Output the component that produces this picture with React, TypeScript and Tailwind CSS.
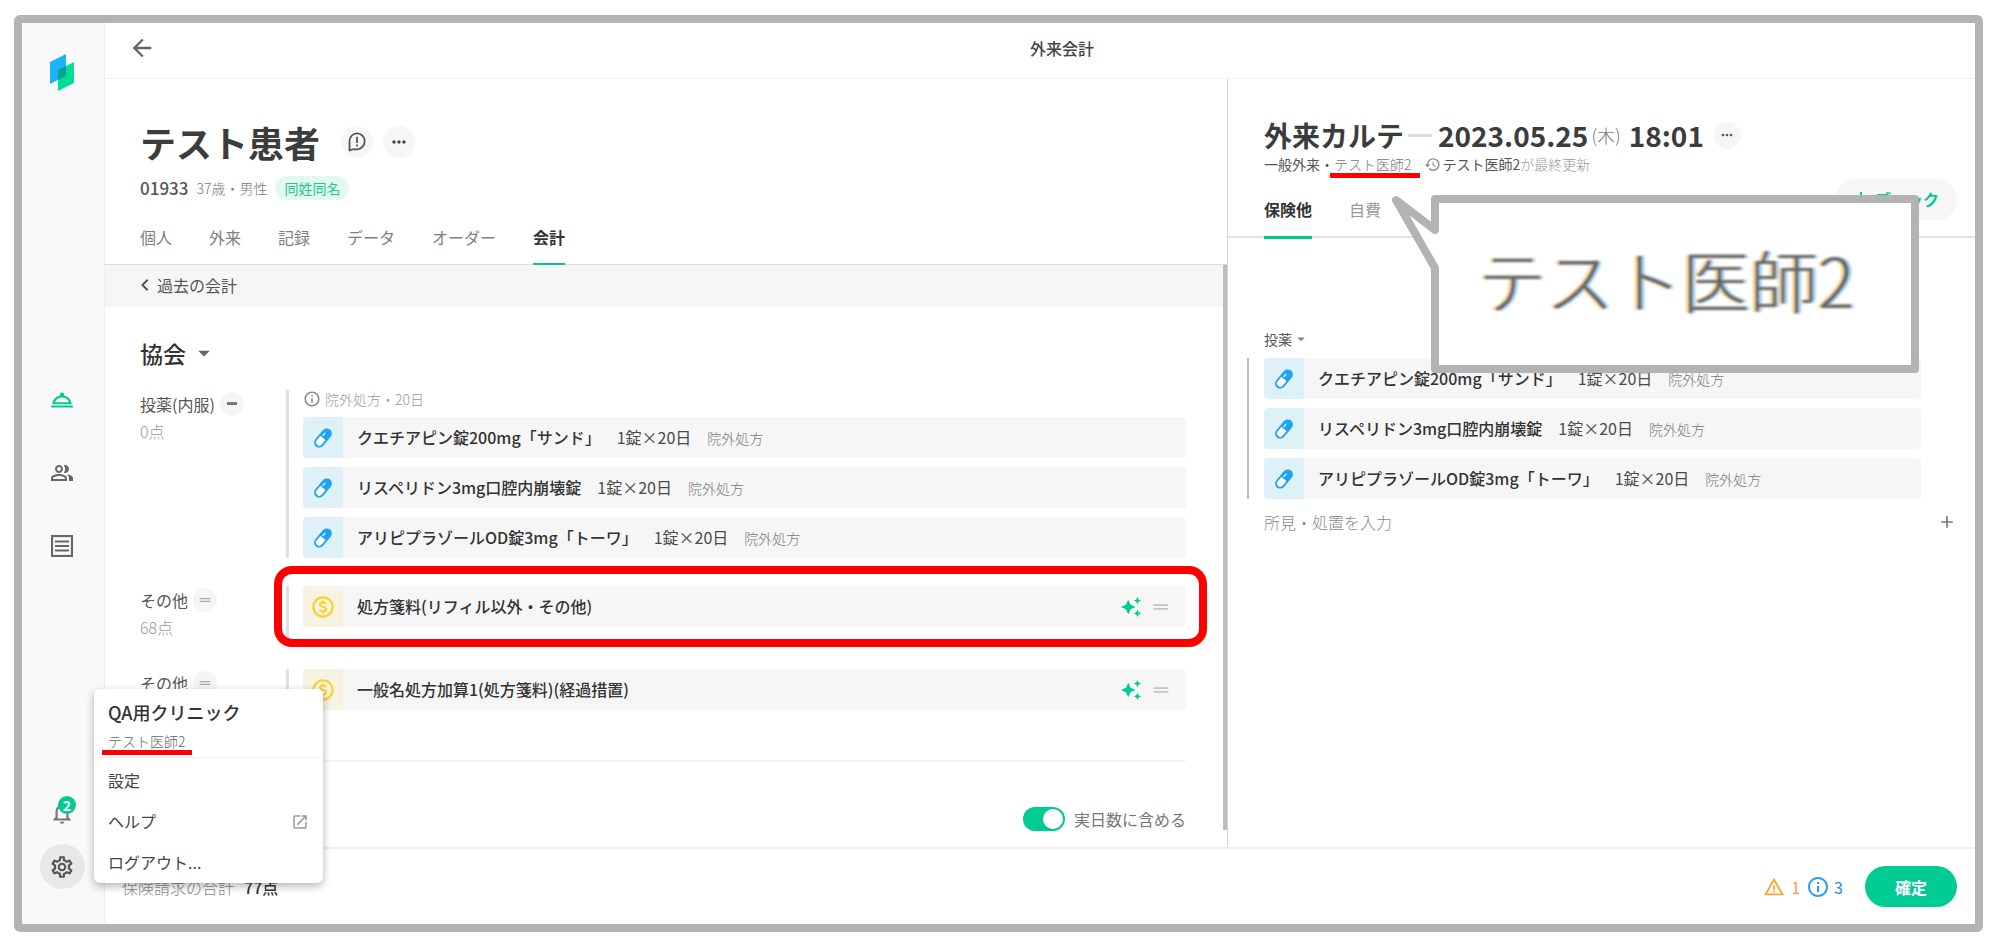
import React from "react";
import {
  MdArrowBack,
  MdOutlineRoomService,
  MdOutlinePeopleAlt,
  MdNotificationsNone,
  MdOutlineSettings,
  MdMoreHoriz,
  MdArrowDropDown,
  MdInfoOutline,
  MdWarningAmber,
  MdHistory,
  MdAdd,
  MdOpenInNew,
  MdAutoAwesome,
  MdDragHandle,
  MdChevronLeft,
} from "react-icons/md";

type Drug = { name: string; dose: string; note: string };

const drugs: Drug[] = [
  { name: "クエチアピン錠200mg「サンド」", dose: "1錠×20日", note: "院外処方" },
  { name: "リスペリドン3mg口腔内崩壊錠", dose: "1錠×20日", note: "院外処方" },
  { name: "アリピプラゾールOD錠3mg「トーワ」", dose: "1錠×20日", note: "院外処方" },
];

const tabs = ["個人", "外来", "記録", "データ", "オーダー", "会計"];

function Logo() {
  return (
    <svg width="24" height="38" viewBox="0 0 24 38" aria-hidden="true">
      <path d="M0 8 L16 0 V22 L0 30 Z" fill="#1cb5fb" />
      <path d="M8 16 L24 8 V29 L8 37 Z" fill="#00dc9b" />
      <path d="M8 16 L16 12 V22 L8 26 Z" fill="#00a391" />
    </svg>
  );
}

function PillIcon() {
  return (
    <svg width="20" height="20" viewBox="0 0 20 20" aria-hidden="true">
      <g transform="rotate(40 10 10)">
        <rect x="5.800" y="0" width="8.400" height="20" rx="4.200" fill="#fff" stroke="#1ca4f0" strokeWidth="1.900" />
        <path d="M5.800 10 V4.200 a4.200 4.200 0 0 1 8.400 0 V10 Z" fill="#1ca4f0" />
        <path d="M8.400 5 V8" stroke="#fff" strokeWidth="1.300" strokeLinecap="round" />
      </g>
    </svg>
  );
}

function CoinIcon() {
  return (
    <svg width="22" height="22" viewBox="0 0 22 22" fill="none" stroke="#fbd02d" aria-hidden="true">
      <circle cx="11" cy="11" r="9.600" strokeWidth="2.200" />
      <path
        d="M14 8.200 C13.600 7 12.500 6.400 11 6.400 C9.300 6.400 8 7.200 8 8.600 C8 11.600 14.200 10.200 14.200 13.300 C14.200 14.800 12.800 15.600 11 15.600 C9.300 15.600 8.100 14.900 7.800 13.600 M11 4.400 V6.400 M11 15.600 V17.600"
        strokeWidth="2"
      />
    </svg>
  );
}

function CommentIcon() {
  return (
    <svg width="18" height="20" viewBox="0 0 18 20" fill="none" stroke="#555" strokeWidth="1.800" aria-hidden="true">
      <path d="M1.500 18.500 V9.500 A7.600 8 0 1 1 9 17.300 H4.500 Z" strokeLinejoin="round" />
      <path d="M9 4.800 V11 M9 12.500 V14.400" />
    </svg>
  );
}

function ListIcon() {
  return (
    <svg width="22" height="22" viewBox="0 0 22 22" fill="none" stroke="#666" aria-hidden="true">
      <rect x="1" y="1" width="20" height="20" strokeWidth="2.200" />
      <path d="M4 6.500 H18 M4 11 H18 M4 15.500 H18" strokeWidth="2" />
    </svg>
  );
}

function MinusIcon() {
  return (
    <svg width="16" height="16" viewBox="0 0 16 16" aria-hidden="true">
      <path d="M3 7.500 H13" stroke="#777" strokeWidth="3" />
    </svg>
  );
}

function DrugRow({ drug }: { drug: Drug }) {
  return (
    <li className="flex h-[41px] items-center overflow-hidden rounded bg-[#f6f6f6]">
      <span className="flex h-full w-10 shrink-0 items-center justify-center bg-[#def0f8]">
        <PillIcon />
      </span>
      <span className="ml-[14px] pb-[2px] font-medium text-[#333]">{drug.name}</span>
      <span className="ml-4 pb-[2px] text-[#4a4a4a]">{drug.dose}</span>
      <span className="ml-4 text-sm font-light text-[#777]">{drug.note}</span>
    </li>
  );
}

function FeeRow({ name }: { name: string }) {
  return (
    <div className="flex h-[41px] items-center overflow-hidden rounded bg-[#f6f6f6]">
      <span className="flex h-full w-10 shrink-0 items-center justify-center bg-[#f6f3e2]">
        <CoinIcon />
      </span>
      <span className="ml-[14px] pb-[2px] font-medium text-[#333]">{name}</span>
      <MdAutoAwesome className="ml-auto size-[22px] text-[#00cb92]" />
      <MdDragHandle className="mr-[14px] ml-2 size-[22px] text-[#c4c4c4]" />
    </div>
  );
}

function GroupLabel({ name, points, collapsed }: { name: string; points?: string; collapsed?: boolean }) {
  return (
    <div className="w-[146px] shrink-0">
      <div className="flex h-[27px] items-center gap-[5px]">
        <span className="text-[#555]">{name}</span>
        <button
          aria-label={name + "のメニュー"}
          className="flex size-6 items-center justify-center rounded-full bg-[#f5f5f5]"
        >
          {collapsed ? <MinusIcon /> : <MdDragHandle className="size-4 text-[#aaa]" />}
        </button>
      </div>
      {points && <p className="h-7 leading-7 font-light text-[#999]">{points}</p>}
    </div>
  );
}

function Sidebar() {
  return (
    <nav className="relative flex w-[83px] shrink-0 flex-col items-center border-r border-[#efefef] bg-[#f9f9f9] pt-[31px] pr-[2px] pb-[35px]">
      <Logo />
      <div className="mt-[294px] flex flex-col items-center gap-[45px]">
        <a href="#reception" aria-label="受付" className="flex size-7 items-center justify-center text-[#00cb92]">
          <MdOutlineRoomService className="size-[26px]" />
        </a>
        <a href="#patients" aria-label="患者" className="flex size-7 items-center justify-center text-[#666]">
          <MdOutlinePeopleAlt className="size-6" />
        </a>
        <a href="#list" aria-label="一覧" className="flex size-7 items-center justify-center">
          <ListIcon />
        </a>
      </div>
      <button aria-label="通知" className="relative mt-auto mb-[18px] text-[#777]">
        <MdNotificationsNone className="size-[26px]" />
        <span className="absolute -top-1 left-[9px] flex size-[18px] items-center justify-center rounded-full bg-[#00cb92] text-sm leading-none font-bold text-white">
          2
        </span>
      </button>
      <button
        aria-label="設定"
        className="flex size-[45px] items-center justify-center rounded-full bg-[#e8e8e8] text-[#555]"
      >
        <MdOutlineSettings className="size-[26px]" />
      </button>
      <AccountMenu />
    </nav>
  );
}

function AccountMenu() {
  return (
    <div className="absolute bottom-[41px] left-[72px] z-20 w-[229px] rounded-md bg-white text-[#444] shadow-[0_3px_8px_rgba(0,0,0,0.3)]">
      <div className="border-b border-[#eee] px-[14px] pt-[7px] pb-[3px]">
        <p className="text-lg leading-8 font-medium text-[#333]">QA用クリニック</p>
        <p className="relative text-sm leading-[26px] font-light text-[#666]">
          テスト医師2
          <span className="absolute -bottom-px -left-[6px] h-[5px] w-[90px] bg-[#f00]" />
        </p>
      </div>
      <ul className="pt-[2px] leading-[41px]">
        <li>
          <a href="#settings" className="block px-[14px]">設定</a>
        </li>
        <li>
          <a href="#help" className="flex items-center justify-between px-[14px]">
            ヘルプ
            <MdOpenInNew className="size-[18px] text-[#999]" />
          </a>
        </li>
        <li>
          <a href="#logout" className="block px-[14px]">ログアウト...</a>
        </li>
      </ul>
    </div>
  );
}

function PatientHeader() {
  return (
    <div className="h-[186px] shrink-0 border-b border-[#ddd] px-[35px] pt-[35px]">
      <div className="flex h-14 items-center">
        <h1 className="text-4xl font-bold text-[#3c3c3c]">テスト患者</h1>
        <button aria-label="コメント" className="ml-[21px] flex size-8 items-center justify-center rounded-full bg-[#f6f6f6]">
          <CommentIcon />
        </button>
        <button aria-label="その他の操作" className="ml-[10px] flex size-8 items-center justify-center rounded-full bg-[#f6f6f6] text-[#444]">
          <MdMoreHoriz className="size-5" />
        </button>
      </div>
      <div className="mt-[6px] flex h-6 items-center">
        <span className="text-[17px] font-medium text-[#555]">01933</span>
        <span className="ml-2 text-sm font-light text-[#777]">37歳・男性</span>
        <span className="ml-2 flex h-6 items-center rounded-full bg-[#e2f8f1] px-[9px] text-sm text-[#1fc993]">同姓同名</span>
      </div>
      <div role="tablist" className="mt-[11px] flex gap-[37px]">
        {tabs.map((t) => (
          <button
            key={t}
            role="tab"
            aria-selected={t === "会計"}
            className={
              t === "会計"
                ? "-mb-px h-[55px] border-b-3 border-[#00cb92] font-bold text-[#333]"
                : "-mb-px h-[55px] border-b-3 border-transparent text-[#808080]"
            }
          >
            {t}
          </button>
        ))}
      </div>
    </div>
  );
}

function Accounting() {
  return (
    <section className="relative flex w-3/5 shrink-0 flex-col">
      <PatientHeader />
      <div className="flex grow flex-col">
        <a href="#past" className="flex h-[42px] shrink-0 items-center bg-[#f6f6f6] pb-[2px] pl-7 text-[#555]">
          <MdChevronLeft className="size-6" />
          過去の会計
        </a>
        <div className="flex grow flex-col pr-[41px] pl-[35px]">
          <h2 className="mt-[26px] flex h-10 items-center gap-1 text-[23px] font-medium text-[#333]">
            協会
            <MdArrowDropDown className="size-7 text-[#666]" />
          </h2>
          <div className="mt-[17px] flex">
            <GroupLabel name="投薬(内服)" points="0点" collapsed />
            <div className="grow border-l-3 border-[#e0e0e0] pl-[14px]">
              <p className="flex h-[18px] items-center gap-1 text-sm font-light text-[#999]">
                <MdInfoOutline className="size-[18px] text-[#888]" />
                院外処方・20日
              </p>
              <ul className="mt-[9px] flex flex-col gap-[9px]">
                {drugs.map((d) => (
                  <DrugRow key={d.name} drug={d} />
                ))}
              </ul>
            </div>
          </div>
          <div className="relative mt-7 flex">
            <GroupLabel name="その他" points="68点" />
            <div className="grow border-l-3 border-[#e0e0e0] pl-[14px]">
              <FeeRow name="処方箋料(リフィル以外・その他)" />
            </div>
            <div className="absolute -top-5 -right-[21px] left-[134px] h-[81px] rounded-[18px] border-8 border-[#f00]" />
          </div>
          <div className="mt-7 flex">
            <GroupLabel name="その他" />
            <div className="grow border-l-3 border-[#e0e0e0] pl-[14px]">
              <FeeRow name="一般名処方加算1(処方箋料)(経過措置)" />
            </div>
          </div>
          <label className="mt-[50px] flex items-center justify-end gap-[9px] border-t-2 border-[#f5f5f5] pt-[45px] text-[#777]">
            <input type="checkbox" role="switch" defaultChecked className="sr-only" />
            <span className="flex h-6 w-[42px] items-center justify-end rounded-full bg-[#00cb92] p-[2px]">
              <span className="size-5 rounded-full bg-white" />
            </span>
            実日数に含める
          </label>
        </div>
      </div>
      <div className="absolute top-[186px] right-0 bottom-[17px] w-1 bg-[#bdbdbd]" />
    </section>
  );
}

function Callout() {
  return (
    <div className="absolute top-[110px] left-[163px] z-10 h-[186px] w-[532px]">
      <svg className="absolute inset-0" width="532" height="186" viewBox="0 0 532 186" aria-hidden="true">
        <path
          d="M44 10 H524 V180 H44 V79 L5 11 L44 41 Z"
          fill="#fff"
          stroke="#b3b3b3"
          strokeWidth="8"
          strokeLinejoin="round"
        />
      </svg>
      <p className="relative pt-10 pl-[87px] text-[68px] leading-[100px] font-light text-[#666] blur-[1px] [text-shadow:-3px_0_1px_#fbcf8f,3px_0_1px_#9fd0fa]">
        テスト医師2
      </p>
    </div>
  );
}

function Chart() {
  return (
    <section className="relative min-w-0 grow border-l border-[#d4d4d4]">
      <div className="relative h-[159px] border-b-2 border-[#e2e2e2] pt-9 pl-9">
        <div className="flex h-10 items-center text-[28px] font-bold text-[#3c3c3c]">
          <h2>外来カルテ</h2>
          <span className="mr-[6px] ml-1 h-[3px] w-6 bg-[#ddd]" />
          <span>2023.05.25</span>
          <span className="mr-2 ml-[3px] text-lg font-light text-[#777]">(木)</span>
          <span>18:01</span>
          <button aria-label="カルテの操作" className="ml-[10px] flex size-[27px] items-center justify-center rounded-full bg-[#f6f6f6] text-[#555]">
            <MdMoreHoriz className="size-4" />
          </button>
        </div>
        <div className="flex h-[18px] items-center text-sm text-[#555]">
          <span>一般外来・</span>
          <span className="relative font-light text-[#777]">
            テスト医師2
            <span className="absolute -bottom-1 -left-1 h-[5px] w-[90px] bg-[#f00]" />
          </span>
          <MdHistory className="mr-[2px] ml-3 size-[17px] text-[#888]" />
          <span>テスト医師2</span>
          <span className="font-light text-[#999]">が最終更新</span>
        </div>
        <div role="tablist" className="mt-[11px] flex gap-[37px]">
          <button role="tab" aria-selected="true" className="h-[55px] border-b-3 border-[#00cb92] pb-[2px] font-bold text-[#333]">
            保険他
          </button>
          <button role="tab" aria-selected="false" className="h-[55px] border-b-3 border-transparent pb-[2px] text-[#999]">
            自費
          </button>
        </div>
        <button className="absolute top-[100px] right-[18px] flex h-[41px] w-[122px] items-center justify-center gap-[2px] rounded-full bg-[#f6f6f6] pr-1 pb-[2px] font-bold text-[#00cb92]">
          <MdAdd className="size-6" />
          ブロック
        </button>
      </div>
      <div className="pr-[18px] pl-9">
        <button className="mt-[90px] flex h-[22px] items-center text-sm text-[#555]">
          投薬
          <MdArrowDropDown className="size-[18px] text-[#888]" />
        </button>
        <ul className="relative mt-2 mr-[36px] flex flex-col gap-[9px]">
          {drugs.map((d) => (
            <DrugRow key={d.name} drug={d} />
          ))}
          <li aria-hidden="true" className="absolute -left-[17px] h-full w-[2px] bg-[#bdbdbd]" />
        </ul>
        <div className="mt-[7px] flex h-8 items-center">
          <input
            type="text"
            aria-label="所見・処置"
            placeholder="所見・処置を入力"
            className="min-w-0 grow bg-transparent font-light outline-none placeholder:text-[#888]"
          />
          <button aria-label="追加" className="text-[#777]">
            <MdAdd className="size-5" />
          </button>
        </div>
      </div>
      <Callout />
    </section>
  );
}

export default function App() {
  return (
    <div className="flex min-h-screen bg-white pt-[15px] pr-[17px] pb-4 pl-[14px] font-['Noto_Sans_CJK_JP',sans-serif] text-base">
      <div className="flex grow rounded-md border-8 border-[#b3b3b3]">
        <Sidebar />
        <div className="flex min-w-0 grow flex-col">
          <header className="relative flex h-14 shrink-0 items-center justify-center border-b border-[#f3f3f3] pb-[6px] pl-11">
            <button aria-label="戻る" className="absolute left-[23px] text-[#666]">
              <MdArrowBack className="size-7" />
            </button>
            <h1 className="font-medium text-[#444]">外来会計</h1>
          </header>
          <main className="flex grow">
            <Accounting />
            <Chart />
          </main>
          <footer className="flex h-[77px] shrink-0 items-center border-t-2 border-[#eee] pr-[18px] pl-[17px]">
            <span className="font-light text-[#888]">保険請求の合計</span>
            <span className="ml-[10px] font-medium text-[#333]">77点</span>
            <div className="ml-auto flex items-center">
              <MdWarningAmber className="size-[22px] text-[#fba62d]" />
              <span className="ml-[6px] text-[#fb9a4d]">1</span>
              <MdInfoOutline className="ml-[6px] size-6 text-[#2b9cf0]" />
              <span className="ml-1 text-[#2b8ce0]">3</span>
              <button className="ml-[22px] h-[41px] w-[92px] rounded-full bg-[#00cb92] font-bold text-white">
                確定
              </button>
            </div>
          </footer>
        </div>
      </div>
    </div>
  );
}
